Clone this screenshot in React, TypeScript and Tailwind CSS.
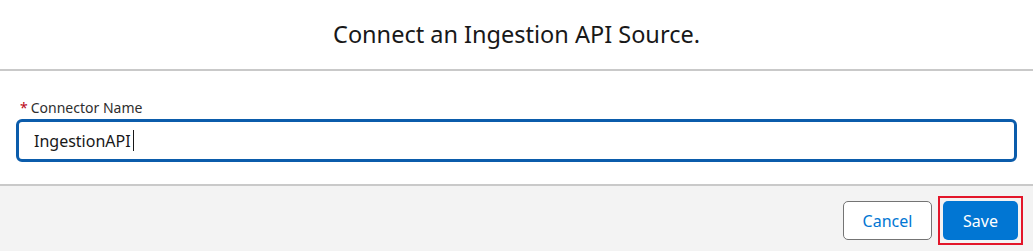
export default function App() {
  return (
    <div className="w-[1033px] h-[251px] bg-white flex flex-col font-['Noto_Sans',sans-serif] text-[#181818]">
      {/* Header */}
      <div className="h-[71px] flex items-center justify-center border-b-2 border-[#c9c9c9] shrink-0">
        <h1 className="text-[23.5px] leading-none">Connect an Ingestion API Source.</h1>
      </div>

      {/* Body */}
      <div className="h-[113px] px-4 pt-[28px] shrink-0">
        <label className="flex items-center text-[14px] leading-[18px] text-[#2e2e2e] ml-[4px]">
          <span className="text-[#ba0517] mr-[3px]">*</span>
          Connector Name
        </label>
        <div className="mt-[2px] h-[43px] rounded-[6px] border-[3px] border-[#0b5cab] flex items-center px-[15px]">
          <span className="text-[16px]">IngestionAPI</span>
          <span className="w-px h-[21px] bg-[#181818] ml-[2px]"></span>
        </div>
      </div>

      {/* Footer */}
      <div className="flex-1 bg-[#f3f3f3] border-t-2 border-[#c9c9c9] flex items-center justify-end gap-[6px] pr-[10px] pt-[4px]">
        <button className="h-[39px] w-[89px] rounded-[5px] border border-[#747474] bg-white text-[#0176d3] text-[16px]">
          Cancel
        </button>
        <div className="border-2 border-[#e3162a] p-[3px]">
          <button className="h-[39px] w-[75px] rounded-[5px] bg-[#0176d3] text-white text-[16px]">
            Save
          </button>
        </div>
      </div>
    </div>
  );
}
